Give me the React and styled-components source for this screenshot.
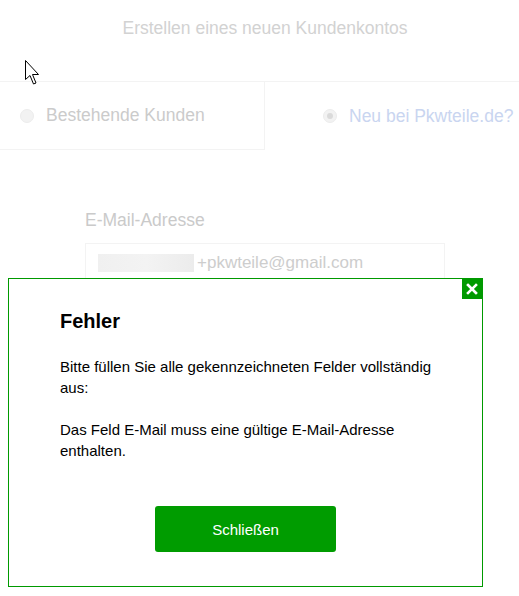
import React from "react";
import styled, { createGlobalStyle } from "styled-components";

const GlobalStyle = createGlobalStyle`
  html, body {
    margin: 0;
    padding: 0;
    background: #fff;
    overflow: hidden;
  }
  body {
    font-family: "Liberation Sans", Arial, sans-serif;
  }
`;

const Page = styled.div`
  position: relative;
  width: 519px;
  height: 596px;
  overflow: hidden;
`;

const Container = styled.div`
  width: 530px;
`;

const Title = styled.h1`
  margin: 0;
  padding-top: 18px;
  height: 81px;
  box-sizing: border-box;
  text-align: center;
  font-size: 17.5px;
  line-height: 20px;
  font-weight: normal;
  color: #d2d2d2;
`;

const Tabs = styled.div`
  display: flex;
  border-top: 1px solid #f3f3f3;
`;

const Tab = styled.div`
  flex: 0 0 50%;
  height: 68px;
  display: flex;
  align-items: center;
  padding-left: ${(p) => (p.$active ? "58px" : "20px")};
  box-sizing: border-box;
  border-bottom: ${(p) => (p.$active ? "none" : "1px solid #f3f3f3")};
  border-right: ${(p) => (p.$active ? "none" : "1px solid #f3f3f3")};
  font-size: 17.5px;
  color: ${(p) => (p.$active ? "#c9d5f0" : "#cbcbcb")};
`;

const Radio = styled.span`
  width: 14px;
  height: 14px;
  border-radius: 50%;
  border: 1px solid #ececec;
  background: #f2f2f2;
  box-sizing: border-box;
  margin-right: 12px;
  display: flex;
  align-items: center;
  justify-content: center;

  &::after {
    content: "";
    display: ${(p) => (p.$checked ? "block" : "none")};
    width: 6px;
    height: 6px;
    border-radius: 50%;
    background: #dadada;
  }
`;

const Form = styled.div`
  padding: 60px 0 0 85px;
`;

const Label = styled.div`
  font-size: 17.5px;
  color: #cacaca;
  margin-bottom: 12px;
`;

const Input = styled.div`
  width: 360px;
  height: 44px;
  border: 1px solid #f3f3f3;
  box-sizing: border-box;
  display: flex;
  align-items: center;
  padding-left: 12px;
  padding-bottom: 5px;
  font-size: 17px;
  color: #cdcdcd;
`;

const Blur = styled.span`
  display: inline-block;
  width: 96px;
  height: 18px;
  margin-right: 3px;
  background: linear-gradient(90deg, #f0f0f0 0%, #f3f3f3 50%, #ececec 100%);
`;

const Cursor = styled.svg`
  position: absolute;
  left: 25px;
  top: 60px;
`;

const Modal = styled.div`
  position: absolute;
  left: 8px;
  top: 278px;
  width: 475px;
  height: 309px;
  box-sizing: border-box;
  border: 1px solid #009a00;
  background: #fff;
  padding: 30px 36px 0 51px;
  color: #000;
`;

const Close = styled.div`
  position: absolute;
  top: 0;
  right: 0;
  width: 20px;
  height: 20px;
  background: #009a00;
  display: flex;
  align-items: center;
  justify-content: center;
`;

const Heading = styled.h2`
  margin: 0;
  font-size: 20px;
  line-height: 24px;
  font-weight: bold;
`;

const Text = styled.p`
  margin: ${(p) => (p.$first ? "23px" : "21px")} 0 0;
  font-size: 15px;
  line-height: 21px;
`;

const Actions = styled.div`
  display: flex;
  justify-content: center;
  margin: 45px 0 0 -15px;
`;

const Button = styled.button`
  width: 181px;
  height: 46px;
  border: none;
  border-radius: 3px;
  background: #009c00;
  color: #fff;
  font-family: "Liberation Sans", Arial, sans-serif;
  font-size: 15px;
  cursor: pointer;
`;

export default function App() {
  return (
    <Page>
      <GlobalStyle />
      <Container>
        <Title>Erstellen eines neuen Kundenkontos</Title>
        <Tabs>
          <Tab>
            <Radio />
            Bestehende Kunden
          </Tab>
          <Tab $active>
            <Radio $checked />
            Neu bei Pkwteile.de?
          </Tab>
        </Tabs>
        <Form>
          <Label>E-Mail-Adresse</Label>
          <Input>
            <Blur />
            +pkwteile@gmail.com
          </Input>
        </Form>
      </Container>

      <Cursor width="16" height="26" viewBox="0 0 16 26">
        <path
          d="M0.5 0.5 L0.5 19.5 L5 15.5 L8.5 24 L11 23 L7.5 14.5 L13.5 14.5 Z"
          fill="#fff"
          stroke="#000"
          strokeWidth="1"
          strokeLinejoin="miter"
        />
      </Cursor>

      <Modal>
        <Close>
          <svg width="12" height="12" viewBox="0 0 12 12">
            <path
              d="M2 2 L10 10 M10 2 L2 10"
              stroke="#fff"
              strokeWidth="2.6"
              strokeLinecap="square"
            />
          </svg>
        </Close>
        <Heading>Fehler</Heading>
        <Text $first>
          Bitte füllen Sie alle gekennzeichneten Felder vollständig aus:
        </Text>
        <Text>Das Feld E-Mail muss eine gültige E-Mail-Adresse enthalten.</Text>
        <Actions>
          <Button>Schließen</Button>
        </Actions>
      </Modal>
    </Page>
  );
}
